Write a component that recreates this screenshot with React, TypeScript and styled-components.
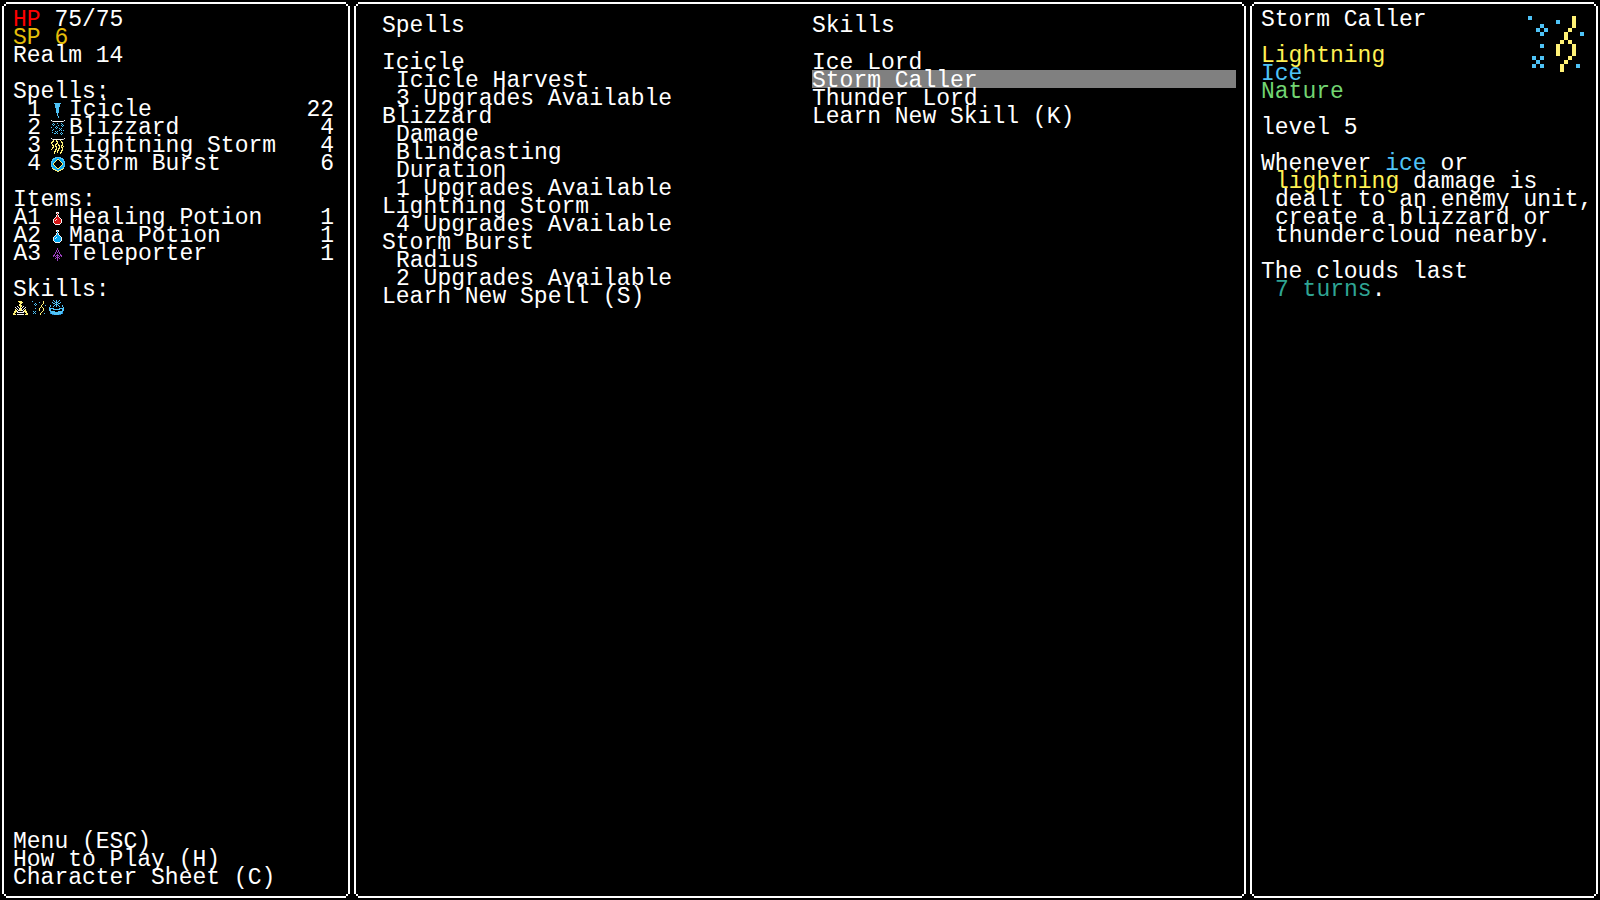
import React from "react";
import styled, { createGlobalStyle } from "styled-components";

const color = {
  text: "#ffffff",
  hp: "#ff0000",
  sp: "#e6be0a",
  lightning: "#fff153",
  ice: "#4fc3f7",
  nature: "#72d572",
  value: "#2fa594",
  highlight: "#808080",
};

const GlobalStyle = createGlobalStyle`
  *, *::before, *::after { box-sizing: border-box; }
  body {
    margin: 0;
    background: #000;
    color: ${color.text};
    font: 23px/18px "Liberation Mono", "DejaVu Sans Mono", monospace;
  }
  h1, h2, p, ul { margin: 0; padding: 0; font: inherit; }
  ul { list-style: none; }
`;

/* Sprites are drawn on a 16 x 16 grid, one character for each pixel. */
const palette: Record<string, string> = {
  b: "#4fc3f7",
  d: "#1e88d8",
  y: "#fff176",
  w: "#f4f4f4",
  g: "#9e9e9e",
  r: "#d31616",
  a: "#03a9f4",
  p: "#9c3fc0",
};

const sprites: Record<string, string[]> = {
  icicle: [
    "",
    "....bbbbbbb",
    ".....bbbbb",
    ".....bbbbb",
    ".....bbbbb",
    ".....bbbb",
    "......bbb",
    "......bbb",
    "......bbb",
    "......bbb",
    "......bbb",
    ".......b",
    ".......b",
    ".......b",
    "........b",
    "........b",
  ],
  blizzard: [
    ".w............w",
    "..gwwwwwwwwwwg",
    "",
    "...b...b...b",
    "..b.b.......b",
    "...b....b..b.b",
    "......b.....b",
    ".b...b.b.",
    "......b..b.b",
    "...b......b",
    "..b......b.b.b",
    ".....b.b",
    "..b...b....b",
    "....bb.b..b.b",
    "...........b",
  ],
  lightningStorm: [
    ".w............w",
    "..gwwwwwwwwwwg",
    "...y..y...y",
    "..yy..yy...y",
    ".yy....y...yy",
    ".y....yy....y",
    "..y..yy.y...y",
    "..yy.y..yy.yy",
    "...y.yy..y.y.y",
    "..yy..y..y.yy",
    "..y...y.yy..y",
    ".y...yy.y...y",
    ".....y.yy..yy",
    "....yy.y...y",
    "....y..y..yy",
    "....y.....y",
  ],
  stormBurst: [
    "",
    ".....bbbbbb",
    "...bbbaaaabbb",
    "..bbaaayyaaabb",
    "..baaay..yaaab",
    ".bbaay....yaabb",
    ".baay......yaab",
    ".bay........yab",
    ".bay........yab",
    ".baay......yaab",
    ".bbaay....yaabb",
    "..baaay..yaaab",
    "..ybaaayyaaaby",
    "...yybaaaabyy",
    ".....yybbyy",
    ".......yy",
  ],
  healing: [
    "",
    "",
    "......www",
    "......wrw",
    ".......w",
    "......wrw",
    "......wrw",
    ".....wrrrw",
    "....wrrrrrw",
    "...wrrwrrrrw",
    "...wrwrrrrrw",
    "...wrrrrrrrw",
    "...wrrrrrrrw",
    "....wrrrrrw",
    ".....wwwww",
  ],
  mana: [
    "",
    "",
    "......www",
    "......waw",
    ".......w",
    "......waw",
    "......waw",
    ".....waaaw",
    "....waaaaaw",
    "...waawaaaaw",
    "...wawaaaaaw",
    "...waaaaaaaw",
    "...waaaaaaaw",
    "....waaaaaw",
    ".....wwwww",
  ],
  teleporter: [
    "",
    "",
    ".......p",
    ".......p",
    "......p.p",
    "......p.p",
    ".....p.p.p",
    ".....p...p",
    "....p..p..p",
    "...pp.ppp.pp",
    "...p.p.p.p.p",
    "......ppp",
    ".....p.p.p",
    ".......p",
    ".......p",
  ],
  thunderLord: [
    "",
    ".....yyyy",
    "......yyyy",
    ".......yy",
    "......yy",
    "......yyy",
    "....w..yy.w",
    "..w..w.y.w..w",
    "...w..wyw..w",
    "..y.w.yyy.w.y",
    "..yy.wwyww.yy",
    ".yyyw.....wyyy",
    ".yy.wwwwwww.yy",
    "yy...........yy",
    "yyy.wwwwwww.yyy",
  ],
  stormCaller: [
    "",
    ".b..........y",
    "........b...y",
    "....b.......y",
    "...b.b.....y",
    "....b.....y...b",
    "..........y",
    ".........y.y",
    "....b...y...y",
    "........y...y",
    "........y...y",
    "..b.b......y",
    "...b......y",
    "..b.b....y...b",
    ".........y",
  ],
  iceLord: [
    "....b..b..b",
    ".....b.b.b",
    "...b..bbb..b",
    "....bb.b.bb",
    "......bbb",
    ".b...b.b.b...b",
    ".b..b..b..b..b",
    "b.............b",
    "bbbbb.....bbbbb",
    "bb..bbbbbbb..bb",
    "bb...........bb",
    ".bbbbb...bbbbb",
    ".dbbbbbbbbbbbd",
    ".dbbbbbbbbbbbd",
    "...ddbbbbbdd",
  ],
};

const SpriteSvg = styled.svg<{ $size: number }>`
  display: block;
  flex: none;
  width: ${(p) => p.$size}px;
  height: ${(p) => p.$size}px;
`;

function Sprite({ name, size = 16 }: { name: string; size?: number }) {
  return (
    <SpriteSvg $size={size} viewBox="0 0 16 16" shapeRendering="crispEdges" aria-hidden="true">
      {sprites[name].flatMap((row, y) =>
        [...row].map((c, x) =>
          c === "." ? null : (
            <rect key={`${x}-${y}`} x={x} y={y} width={1} height={1} fill={palette[c]} />
          ),
        ),
      )}
    </SpriteSvg>
  );
}

const Screen = styled.div`
  display: grid;
  grid-template-columns: 348px minmax(0, 1fr) 348px;
  gap: 4px;
  min-height: 100vh;
  padding: 2px;
`;

/* White 2px frame whose corners are cut to a single pixel step. */
const line = "linear-gradient(#fff, #fff)";
const frame = `
  background:
    ${line} top center / calc(100% - 8px) 2px,
    ${line} bottom center / calc(100% - 8px) 2px,
    ${line} center left / 2px calc(100% - 8px),
    ${line} center right / 2px calc(100% - 8px),
    ${line} top 2px left 2px / 2px 2px,
    ${line} top 2px right 2px / 2px 2px,
    ${line} bottom 2px left 2px / 2px 2px,
    ${line} bottom 2px right 2px / 2px 2px;
  background-repeat: no-repeat;
`;

const StatusPanel = styled.aside`
  ${frame}
  display: flex;
  flex-direction: column;
  gap: 18px;
  padding: 9px 16px 11px 11px;
`;

const SheetPanel = styled.main`
  ${frame}
  display: grid;
  grid-template-columns: 1fr 1fr;
  align-items: start;
  gap: 6px;
  padding: 15px 10px 15px 28px;
`;

const DetailPanel = styled.aside`
  ${frame}
  display: flex;
  flex-direction: column;
  gap: 18px;
  padding: 9px 4px 11px 11px;
`;

const Ink = styled.span<{ $color: string }>`
  color: ${(p) => p.$color};
`;

const PlainButton = styled.button`
  display: block;
  width: 100%;
  height: 18px;
  padding: 0;
  border: 0;
  background: none;
  color: inherit;
  font: inherit;
  text-align: left;
  white-space: nowrap;
  cursor: pointer;
  &:hover { background: ${color.highlight}; }
`;

const SlotButton = styled(PlainButton)`
  display: grid;
  grid-template-columns: 28px 28px 1fr auto;
  align-items: center;
`;

const SlotKey = styled.span`
  text-align: right;
`;

const SlotIcon = styled.span`
  display: flex;
  justify-content: flex-end;
  padding-right: 3px;
`;

const SkillIcons = styled.div`
  display: flex;
  gap: 2px;
  padding-top: 1px;
`;

const Menu = styled.nav`
  margin-top: auto;
`;

const SheetColumn = styled.section`
  display: flex;
  flex-direction: column;
  gap: 17px;
`;

const SheetButton = styled(PlainButton)<{ $indent?: boolean; $selected?: boolean }>`
  padding-top: 2px;
  padding-left: ${(p) => (p.$indent ? 14 : 0)}px;
  background: ${(p) => (p.$selected ? color.highlight : "none")};
`;

const DetailHeader = styled.header`
  display: flex;
  justify-content: space-between;
  padding-right: 6px;
`;

const DetailTitle = styled.div`
  display: flex;
  flex-direction: column;
  gap: 18px;
`;

const DetailIcon = styled.div`
  padding-top: 1px;
`;

const Paragraph = styled.p`
  padding-left: 14px;
  text-indent: -14px;
`;

type Slot = { slot: string; icon: string; name: string; count: number };

const spellSlots: Slot[] = [
  { slot: "1", icon: "icicle", name: "Icicle", count: 22 },
  { slot: "2", icon: "blizzard", name: "Blizzard", count: 4 },
  { slot: "3", icon: "lightningStorm", name: "Lightning Storm", count: 4 },
  { slot: "4", icon: "stormBurst", name: "Storm Burst", count: 6 },
];

const itemSlots: Slot[] = [
  { slot: "A1", icon: "healing", name: "Healing Potion", count: 1 },
  { slot: "A2", icon: "mana", name: "Mana Potion", count: 1 },
  { slot: "A3", icon: "teleporter", name: "Teleporter", count: 1 },
];

const spellRows: { name: string; indent?: boolean }[] = [
  { name: "Icicle" },
  { name: "Icicle Harvest", indent: true },
  { name: "3 Upgrades Available", indent: true },
  { name: "Blizzard" },
  { name: "Damage", indent: true },
  { name: "Blindcasting", indent: true },
  { name: "Duration", indent: true },
  { name: "1 Upgrades Available", indent: true },
  { name: "Lightning Storm" },
  { name: "4 Upgrades Available", indent: true },
  { name: "Storm Burst" },
  { name: "Radius", indent: true },
  { name: "2 Upgrades Available", indent: true },
  { name: "Learn New Spell (S)" },
];

const skillRows = ["Ice Lord", "Storm Caller", "Thunder Lord", "Learn New Skill (K)"];

function SlotList({ title, slots }: { title: string; slots: Slot[] }) {
  return (
    <section>
      <h2>{title}</h2>
      <ul>
        {slots.map((s) => (
          <li key={s.slot}>
            <SlotButton type="button">
              <SlotKey>{s.slot}</SlotKey>
              <SlotIcon>
                <Sprite name={s.icon} />
              </SlotIcon>
              <span>{s.name}</span>
              <span>{s.count}</span>
            </SlotButton>
          </li>
        ))}
      </ul>
    </section>
  );
}

export default function App() {
  const [selected, setSelected] = React.useState("Storm Caller");
  return (
    <>
      <GlobalStyle />
      <Screen>
        <StatusPanel>
          <section>
            <p>
              <Ink $color={color.hp}>HP</Ink> 75/75
            </p>
            <p>
              <Ink $color={color.sp}>SP 6</Ink>
            </p>
            <p>Realm 14</p>
          </section>
          <SlotList title="Spells:" slots={spellSlots} />
          <SlotList title="Items:" slots={itemSlots} />
          <section>
            <h2>Skills:</h2>
            <SkillIcons>
              <Sprite name="thunderLord" />
              <Sprite name="stormCaller" />
              <Sprite name="iceLord" />
            </SkillIcons>
          </section>
          <Menu>
            <PlainButton type="button">Menu (ESC)</PlainButton>
            <PlainButton type="button">How to Play (H)</PlainButton>
            <PlainButton type="button">Character Sheet (C)</PlainButton>
          </Menu>
        </StatusPanel>

        <SheetPanel>
          <SheetColumn>
            <h2>Spells</h2>
            <ul>
              {spellRows.map((row) => (
                <li key={row.name}>
                  <SheetButton type="button" $indent={row.indent}>
                    {row.name}
                  </SheetButton>
                </li>
              ))}
            </ul>
          </SheetColumn>
          <SheetColumn>
            <h2>Skills</h2>
            <ul>
              {skillRows.map((name) => (
                <li key={name}>
                  <SheetButton
                    type="button"
                    $selected={name === selected}
                    onClick={() => setSelected(name)}
                  >
                    {name}
                  </SheetButton>
                </li>
              ))}
            </ul>
          </SheetColumn>
        </SheetPanel>

        <DetailPanel>
          <DetailHeader>
            <DetailTitle>
              <h1>Storm Caller</h1>
              <ul>
                <li><Ink $color={color.lightning}>Lightning</Ink></li>
                <li><Ink $color={color.ice}>Ice</Ink></li>
                <li><Ink $color={color.nature}>Nature</Ink></li>
              </ul>
            </DetailTitle>
            <DetailIcon>
              <Sprite name="stormCaller" size={64} />
            </DetailIcon>
          </DetailHeader>
          <p>level 5</p>
          <Paragraph>
            Whenever <Ink $color={color.ice}>ice</Ink> or{" "}
            <Ink $color={color.lightning}>lightning</Ink> damage is dealt to an enemy unit, create a
            blizzard or thundercloud nearby.
          </Paragraph>
          <Paragraph>
            The clouds last
            <br />
            <Ink $color={color.value}>7 turns</Ink>.
          </Paragraph>
        </DetailPanel>
      </Screen>
    </>
  );
}
